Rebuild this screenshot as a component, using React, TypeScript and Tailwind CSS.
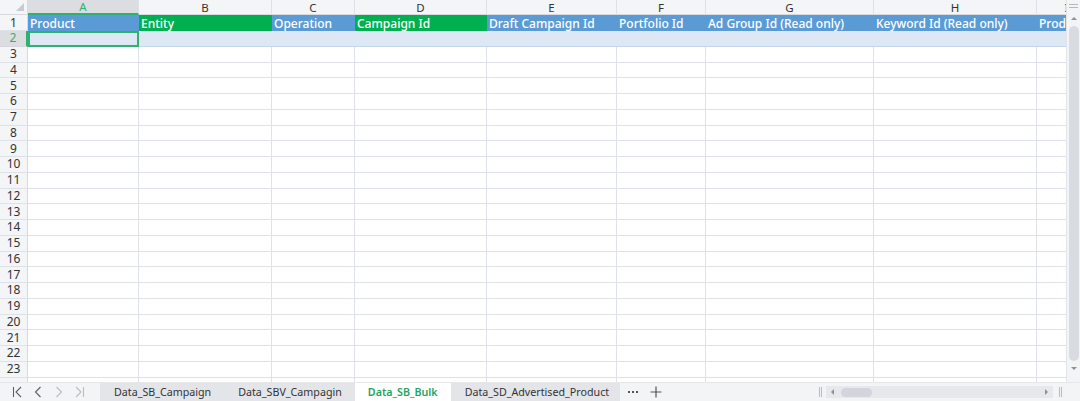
import { ReactNode } from 'react';

// 列宽，最后一列被滚动条截断
const columns = [
  { key: 'A', width: 111, title: 'Product', fill: 'bg-[#5b9bd5]' },
  { key: 'B', width: 133, title: 'Entity', fill: 'bg-[#00b050]' },
  { key: 'C', width: 83, title: 'Operation', fill: 'bg-[#5b9bd5]' },
  { key: 'D', width: 132, title: 'Campaign Id', fill: 'bg-[#00b050]' },
  { key: 'E', width: 130, title: 'Draft Campaign Id', fill: 'bg-[#5b9bd5]' },
  { key: 'F', width: 89, title: 'Portfolio Id', fill: 'bg-[#5b9bd5]' },
  { key: 'G', width: 168, title: 'Ad Group Id (Read only)', fill: 'bg-[#5b9bd5]' },
  { key: 'H', width: 163, title: 'Keyword Id (Read only)', fill: 'bg-[#5b9bd5]' },
  { key: 'I', width: 60, title: 'Product Targeting Id', fill: 'bg-[#5b9bd5]' },
];

const emptyRows = Array.from({ length: 22 }, (_, i) => i + 3);

const sheets = [
  { name: 'Data_SB_Campaign', active: false, pad: 'px-[14px]' },
  { name: 'Data_SBV_Campagin', active: false, pad: 'px-[13px]' },
  { name: 'Data_SB_Bulk', active: true, pad: 'px-[13px]' },
  { name: 'Data_SD_Advertised_Product', active: false, pad: 'pl-[14px] pr-[11px]' },
];

function RowHead({ children, selected }: { children: ReactNode; selected?: boolean }) {
  return (
    <div
      className={
        'w-[28px] shrink-0 h-full flex items-center justify-center text-[12px] leading-none border-b ' +
        (selected
          ? 'bg-[#dcdde0] text-[#2fb170] border-b-[#d4d6dc] border-r-2 border-r-[#2fb170]'
          : 'bg-[#f4f5f7] text-[#333] border-b-[#dfe1e8] border-r border-r-[#d8dae0]')
      }
    >
      {children}
    </div>
  );
}

function Chevron({ dir, bar, light }: { dir: 'l' | 'r'; bar?: boolean; light?: boolean }) {
  const color = light ? '#b9bcc4' : '#5c5f66';
  return (
    <svg width="12" height="14" viewBox="0 0 12 14" fill="none" stroke={color} strokeWidth="1.1">
      {dir === 'l' ? (
        <>
          {bar && <path d="M2.5 2v10" />}
          <path d={bar ? 'M10 2L5 7l5 5' : 'M8.5 2L3.5 7l5 5'} />
        </>
      ) : (
        <>
          <path d={bar ? 'M2 2l5 5-5 5' : 'M3.5 2l5 5-5 5'} />
          {bar && <path d="M9.5 2v10" />}
        </>
      )}
    </svg>
  );
}

export default function App() {
  return (
    <div className="w-[1080px] h-[401px] overflow-hidden bg-white flex flex-col font-['Noto_Sans','Liberation_Sans',sans-serif]">
      <div className="flex h-[382px] overflow-hidden">
        {/* 表格区域 */}
        <div className="flex-1 flex flex-col overflow-hidden">
          {/* 列标题 */}
          <div className="flex h-[15px] shrink-0">
            <div className="w-[28px] shrink-0 bg-[#f4f5f7] border-r border-b border-[#d8dae0] relative">
              <div className="absolute right-[3px] bottom-[3px] w-0 h-0 border-l-[8px] border-l-transparent border-b-[8px] border-b-[#c9cbd0]" />
            </div>
            {columns.map((c) => (
              <div
                key={c.key}
                style={{ width: c.width }}
                className={
                  'shrink-0 flex items-center justify-center text-[11.5px] leading-[13px] border-r border-r-[#dfe1e8] ' +
                  (c.key === 'A'
                    ? 'bg-[#dcdde0] text-[#2fb170] border-b-2 border-b-[#2fb170]'
                    : 'bg-[#f4f5f7] text-[#333] border-b border-b-[#d8dae0]')
                }
              >
                {c.key}
              </div>
            ))}
          </div>

          {/* 第1行：表头 */}
          <div className="flex h-[16px] shrink-0">
            <RowHead>1</RowHead>
            {columns.map((c) => (
              <div
                key={c.key}
                style={{ width: c.width }}
                className={`shrink-0 ${c.fill} text-white text-[12px] font-medium leading-[17px] pl-[2px] whitespace-nowrap overflow-hidden`}
              >
                {c.title}
              </div>
            ))}
          </div>

          {/* 第2行：选中行 */}
          <div className="flex h-[15.8px] shrink-0">
            <RowHead selected>2</RowHead>
            <div className="w-[111px] shrink-0 bg-[#dde8f4] border-2 border-[#2fb170]" />
            <div className="flex-1 bg-[#dde8f4] border-b border-[#c6d7ec]" />
          </div>

          {emptyRows.map((r) => (
            <div key={r} className="flex h-[15.76px] shrink-0">
              <RowHead>{r === 24 ? '' : r}</RowHead>
              {columns.map((c) => (
                <div
                  key={c.key}
                  style={{ width: c.width }}
                  className="shrink-0 border-r border-b border-[#dfe1ea]"
                />
              ))}
            </div>
          ))}
        </div>

        {/* 垂直滚动条 */}
        <div className="w-[14px] shrink-0 bg-[#f3f4f6] border-l border-[#e3e4e8] flex flex-col items-center">
          <div className="mt-[4px] w-[9px] h-[4px] border-t border-b border-[#b4b7bd]" />
          <div className="mt-[9px] w-0 h-0 border-l-[3px] border-l-transparent border-r-[3px] border-r-transparent border-b-[3px] border-b-[#8d9097]" />
          <div className="mt-[6px] w-[10px] h-[335px] rounded-full bg-[#d8dbe1]" />
          <div className="mt-[6px] w-0 h-0 border-l-[3px] border-l-transparent border-r-[3px] border-r-transparent border-t-[3px] border-t-[#8d9097]" />
        </div>
      </div>

      {/* 底部工作表标签栏 */}
      <div className="flex-1 flex items-center bg-[#f3f4f6] text-[10.7px] border-t border-[#e6e7eb]">
        <div className="w-[100px] shrink-0 flex items-center gap-[9px] pl-[11px]">
          <Chevron dir="l" bar />
          <Chevron dir="l" />
          <Chevron dir="r" light />
          <Chevron dir="r" bar light />
        </div>
        <div className="flex h-full bg-[#e4e5e9]">
          {sheets.map((s) => (
            <div
              key={s.name}
              className={
                'h-full flex items-center whitespace-nowrap ' +
                s.pad +
                (s.active ? ' bg-white text-[#1fa463] font-semibold' : ' text-[#333]')
              }
            >
              {s.name}
            </div>
          ))}
        </div>
        <div className="ml-[8px] flex gap-[2px]">
          <div className="w-[2px] h-[2px] bg-[#555]" />
          <div className="w-[2px] h-[2px] bg-[#555]" />
          <div className="w-[2px] h-[2px] bg-[#555]" />
        </div>
        <svg className="ml-[12px]" width="12" height="12" viewBox="0 0 12 12" stroke="#555" strokeWidth="1.2">
          <path d="M6 0.5v11M0.5 6h11" />
        </svg>

        {/* 水平滚动条 */}
        <div className="ml-auto flex items-center h-full">
          <div className="w-[3px] h-[10px] border-l border-r border-[#b8bbc2]" />
          <div className="ml-[4px] w-[227px] h-[12px] bg-[#e7e8ec] flex items-center px-[5px]">
            <div className="w-0 h-0 border-t-[3px] border-t-transparent border-b-[3px] border-b-transparent border-r-[3px] border-r-[#8d9097]" />
            <div className="ml-[7px] w-[31px] h-[9px] rounded-full bg-[#d2d5dc]" />
            <div className="ml-auto w-0 h-0 border-t-[3px] border-t-transparent border-b-[3px] border-b-transparent border-l-[3px] border-l-[#8d9097]" />
          </div>
          <div className="ml-[6px] mr-[18px] w-[3px] h-[10px] border-l border-r border-[#b8bbc2]" />
        </div>
      </div>
    </div>
  );
}
